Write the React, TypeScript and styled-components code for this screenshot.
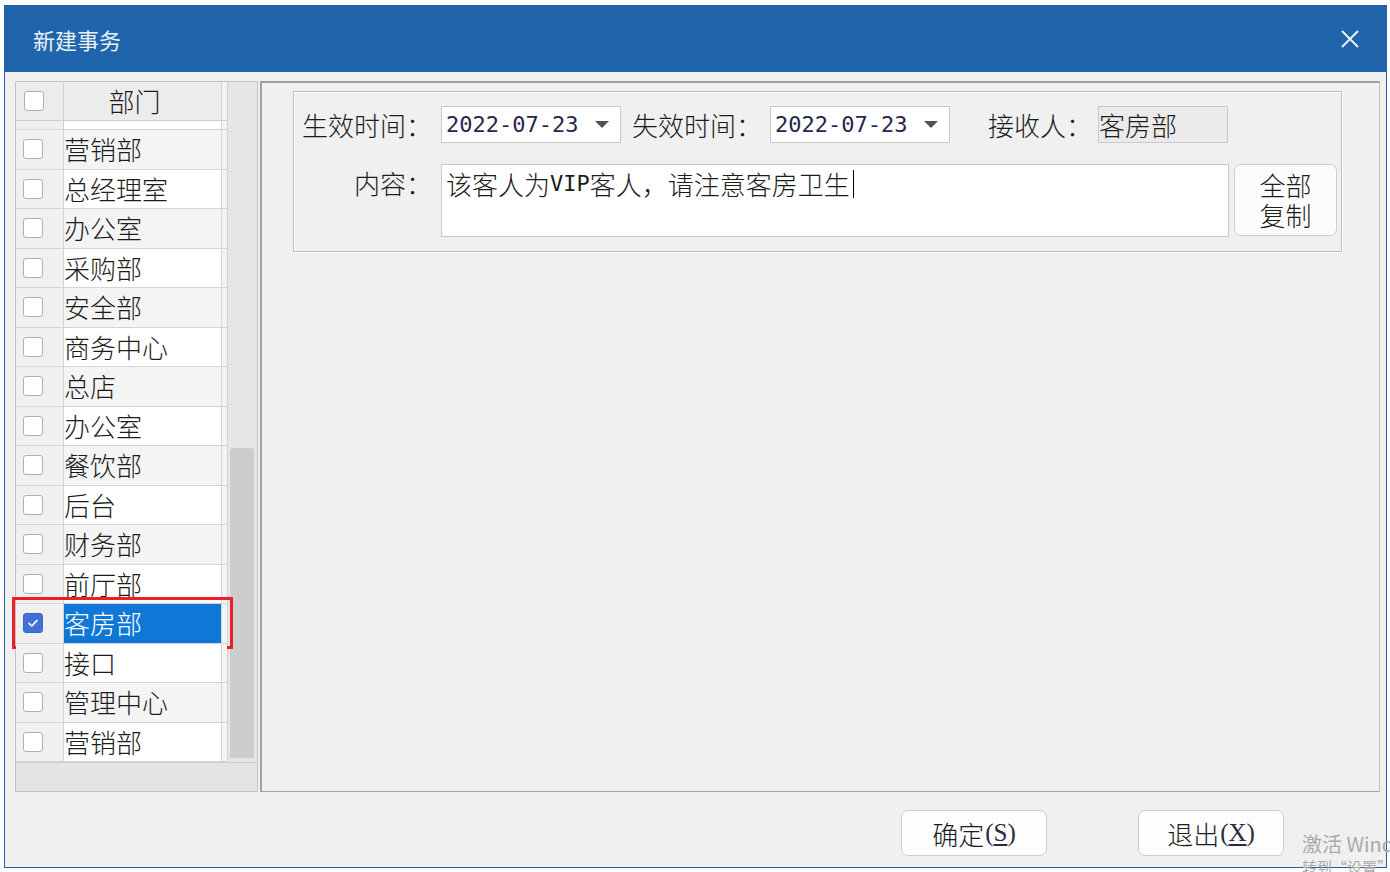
import React from "react";
import styled, { createGlobalStyle } from "styled-components";

const CJK = `"Noto Sans CJK SC", "Noto Sans", sans-serif`;
const MONO = `"DejaVu Sans Mono", "Liberation Mono", "Noto Sans CJK SC", monospace`;

const GlobalStyle = createGlobalStyle`
  html, body { margin: 0; padding: 0; background: #ffffff; overflow: hidden; }
  body { font-family: ${CJK}; color: #1c1c1c; }
  *, *::before, *::after { box-sizing: border-box; }
`;

const Page = styled.div`
  position: relative;
  width: 1390px;
  height: 872px;
  padding: 5px 0 0 4px;
`;

const Window = styled.div`
  width: 1383px;
  height: 863px;
  border: 1px solid #2160a6;
  background: #f0f0f0;
  display: flex;
  flex-direction: column;
`;

const TitleBar = styled.div`
  height: 66px;
  flex-shrink: 0;
  background: #2065ac;
  display: flex;
  align-items: center;
  justify-content: space-between;
  padding: 0 27px 0 28px;
`;

const TitleText = styled.span`
  font-family: ${CJK};
  font-size: 22px;
  color: #e9f0f8;
  letter-spacing: 0;
`;

const CloseButton = styled.span`
  width: 18px;
  height: 18px;
  display: flex;
`;

const Body = styled.div`
  flex: 1;
  display: flex;
  flex-direction: column;
  padding: 9px 6px 0 10px;
`;

const Main = styled.div`
  display: flex;
  gap: 2px;
  height: 711px;
`;

/* ---------- left grid ---------- */
const GridPanel = styled.div`
  width: 243px;
  height: 100%;
  border: 1px solid #c2c2c2;
  background: #f0f0f0;
  display: flex;
  flex-direction: column;
`;

const GridBody = styled.div`
  flex: 1;
  min-height: 0;
  display: flex;
`;

const Table = styled.div`
  width: 212px;
  display: flex;
  flex-direction: column;
  border-right: 1px solid #d2d2d2;
  background: #f4f4f4;
`;

const RowBase = styled.div`
  display: grid;
  grid-template-columns: 48px 158px 1fr;
  border-bottom: 1px solid #d4d4d4;
`;

const HeaderRow = styled(RowBase)`
  height: 39px;
  background: #ececec;
  border-bottom-color: #cdcdcd;
`;

const PartialRow = styled(RowBase)`
  height: 9px;
`;

const DataRow = styled(RowBase)`
  position: relative;
  height: 39.5px;
`;

const CheckCell = styled.div`
  display: flex;
  align-items: center;
  padding-left: 7px;
  background: #f0f0f0;
  border-right: 1px solid #d4d4d4;
`;

const HeaderCheckCell = styled(CheckCell)`
  padding-left: 8px;
  background: #ececec;
`;

const NameCell = styled.div<{ $alt?: boolean; $selected?: boolean }>`
  display: flex;
  align-items: center;
  font-family: ${CJK};
  font-size: 26px;
  font-weight: 300;
  line-height: 1;
  white-space: nowrap;
  border-right: 1px solid #d4d4d4;
  background: ${(p) => (p.$selected ? "#0f77d6" : p.$alt ? "#f4f4f4" : "#ffffff")};
  color: ${(p) => (p.$selected ? "#ffffff" : "#1c1c1c")};
`;

const HeaderNameCell = styled(NameCell)`
  justify-content: center;
  padding-right: 16px;
  background: #ececec;
`;

const FillerCell = styled.div`
  background: #f4f4f4;
`;

const Highlight = styled.div`
  position: absolute;
  left: -4px;
  top: -7px;
  width: 221px;
  height: 52px;
  border: 3px solid #ec1f26;
  pointer-events: none;
`;

const Box = styled.span<{ $checked?: boolean }>`
  width: 20px;
  height: 20px;
  border-radius: 3px;
  border: 1px solid ${(p) => (p.$checked ? "#3b67c9" : "#b0b0b0")};
  background: ${(p) => (p.$checked ? "#4271d6" : "#ffffff")};
  display: flex;
  align-items: center;
  justify-content: center;
`;

const ScrollTrack = styled.div`
  width: 29px;
  background: #e6e6e6;
  display: flex;
  flex-direction: column;
  justify-content: flex-end;
  padding: 0 3px 4px 2px;
`;

const ScrollThumb = styled.div`
  height: 310px;
  background: #cdcdcd;
  border-radius: 3px 3px 0 0;
`;

const BottomStrip = styled.div`
  height: 29px;
  flex-shrink: 0;
  background: #e4e4e4;
  border-top: 1px solid #cdcdcd;
`;

/* ---------- right panel ---------- */
const RightPanel = styled.div`
  flex: 1;
  border-style: solid;
  border-width: 2px 1px 1px 2px;
  border-color: #9f9f9f #c2c2c2 #a3a3a3 #9f9f9f;
  background: #f0f0f0;
  padding: 8px 0 0 31px;
`;

const GroupBox = styled.div`
  width: 1049px;
  height: 161px;
  border: 1px solid #bfbfbf;
  box-shadow: inset 1px 1px 0 #ffffff, 1px 1px 0 #ffffff;
  padding-top: 14px;
`;

const FormRow = styled.div<{ $tall?: boolean }>`
  display: flex;
  align-items: ${(p) => (p.$tall ? "flex-start" : "center")};
  height: ${(p) => (p.$tall ? "73px" : "37px")};
  margin-top: ${(p) => (p.$tall ? "21px" : "0")};
`;

const Label = styled.span<{ $w: number; $ml?: number; $right?: boolean }>`
  width: ${(p) => p.$w}px;
  margin-left: ${(p) => p.$ml ?? 0}px;
  text-align: ${(p) => (p.$right ? "right" : "left")};
  font-family: ${CJK};
  font-size: 26px;
  font-weight: 300;
  line-height: 37px;
  white-space: nowrap;
  flex-shrink: 0;
`;

const Combo = styled.div<{ $ml: number }>`
  width: 180px;
  height: 37px;
  margin-left: ${(p) => p.$ml}px;
  flex-shrink: 0;
  background: #ffffff;
  border: 1px solid #c9c9c9;
  display: flex;
  align-items: center;
  justify-content: space-between;
  padding: 0 11px 0 4px;
`;

const DateText = styled.span`
  font-family: ${MONO};
  font-size: 22px;
  color: #26264e;
  letter-spacing: 0;
`;

const ReadonlyBox = styled.div`
  width: 130px;
  height: 37px;
  margin-left: 6px;
  flex-shrink: 0;
  background: #ebebeb;
  border: 1px solid #c9c9c9;
  display: flex;
  align-items: center;
  font-size: 26px;
  font-weight: 300;
  line-height: 1;
`;

const TextBox = styled.div`
  width: 788px;
  height: 73px;
  margin-left: 9px;
  flex-shrink: 0;
  background: #ffffff;
  border: 1px solid #c9c9c9;
  padding: 1px 0 0 4px;
  font-size: 26px;
  font-weight: 300;
  line-height: 36px;
  white-space: nowrap;
  display: flex;
  align-items: flex-start;
`;

const Latin = styled.span`
  font-family: ${MONO};
  font-size: 22px;
  font-weight: 400;
`;

const Caret = styled.span`
  display: inline-block;
  width: 1px;
  height: 28px;
  margin: 4px 0 0 3px;
  background: #000000;
`;

const CopyButton = styled.button`
  width: 103px;
  height: 72px;
  margin-left: 5px;
  flex-shrink: 0;
  background: #fcfcfc;
  border: 1px solid #cfcfcf;
  border-radius: 7px;
  font-family: ${CJK};
  font-size: 26px;
  font-weight: 300;
  line-height: 30px;
  color: #1c1c1c;
  padding: 0;
  display: flex;
  flex-direction: column;
  align-items: center;
  justify-content: center;
`;

/* ---------- footer ---------- */
const Footer = styled.div`
  display: flex;
  justify-content: flex-end;
  gap: 91px;
  padding: 18px 96px 0 0;
`;

const DialogButton = styled.button`
  width: 146px;
  height: 46px;
  background: #fdfdfd;
  border: 1px solid #cdcdcd;
  border-radius: 7px;
  font-family: ${CJK};
  font-size: 26px;
  font-weight: 300;
  color: #1c1c1c;
  padding: 0;
  display: flex;
  align-items: center;
  justify-content: center;
`;

const Accel = styled.span`
  font-family: "Liberation Serif", serif;
  font-size: 25px;
  color: #2a2a40;
  margin-left: 1px;
  & u {
    text-underline-offset: 3px;
  }
`;

const Watermark = styled.div`
  position: absolute;
  left: 1302px;
  top: 831px;
  color: #a9a9a9;
  font-family: ${CJK};
  font-size: 20px;
  line-height: 26px;
  white-space: nowrap;
`;

const WatermarkSub = styled.div`
  font-size: 15px;
  line-height: 20px;
`;

const departments = [
  "营销部",
  "总经理室",
  "办公室",
  "采购部",
  "安全部",
  "商务中心",
  "总店",
  "办公室",
  "餐饮部",
  "后台",
  "财务部",
  "前厅部",
  "客房部",
  "接口",
  "管理中心",
  "营销部",
];

const SELECTED = 12;

const CheckMark = () => (
  <svg width="14" height="14" viewBox="0 0 14 14">
    <path d="M3 7.3 L5.8 10 L11 4.4" fill="none" stroke="#ffffff" strokeWidth="1.6" strokeLinecap="round" strokeLinejoin="round" />
  </svg>
);

const Arrow = () => (
  <svg width="14" height="7" viewBox="0 0 14 7">
    <polygon points="0,0 14,0 7,7" fill="#4b5848" />
  </svg>
);

export default function App() {
  return (
    <Page>
      <GlobalStyle />
      <Window>
        <TitleBar>
          <TitleText>新建事务</TitleText>
          <CloseButton>
            <svg width="18" height="18" viewBox="0 0 18 18">
              <path d="M1 1 L17 17 M17 1 L1 17" stroke="#f2f6fb" strokeWidth="1.8" />
            </svg>
          </CloseButton>
        </TitleBar>
        <Body>
          <Main>
            <GridPanel>
              <GridBody>
                <Table>
                  <HeaderRow>
                    <HeaderCheckCell>
                      <Box />
                    </HeaderCheckCell>
                    <HeaderNameCell>部门</HeaderNameCell>
                    <FillerCell />
                  </HeaderRow>
                  <PartialRow>
                    <CheckCell />
                    <NameCell />
                    <FillerCell />
                  </PartialRow>
                  {departments.map((name, i) => (
                    <DataRow key={i}>
                      <CheckCell>
                        <Box $checked={i === SELECTED}>{i === SELECTED && <CheckMark />}</Box>
                      </CheckCell>
                      <NameCell $alt={i % 2 === 0} $selected={i === SELECTED}>
                        {name}
                      </NameCell>
                      <FillerCell />
                      {i === SELECTED && <Highlight />}
                    </DataRow>
                  ))}
                </Table>
                <ScrollTrack>
                  <ScrollThumb />
                </ScrollTrack>
              </GridBody>
              <BottomStrip />
            </GridPanel>
            <RightPanel>
              <GroupBox>
                <FormRow>
                  <Label $w={138} $right>
                    生效时间：
                  </Label>
                  <Combo $ml={9}>
                    <DateText>2022-07-23</DateText>
                    <Arrow />
                  </Combo>
                  <Label $w={130} $ml={11}>
                    失效时间：
                  </Label>
                  <Combo $ml={8}>
                    <DateText>2022-07-23</DateText>
                    <Arrow />
                  </Combo>
                  <Label $w={104} $ml={38}>
                    接收人：
                  </Label>
                  <ReadonlyBox>客房部</ReadonlyBox>
                </FormRow>
                <FormRow $tall>
                  <Label $w={138} $right>
                    内容：
                  </Label>
                  <TextBox>
                    该客人为<Latin>VIP</Latin>客人，请注意客房卫生
                    <Caret />
                  </TextBox>
                  <CopyButton>
                    <span>全部</span>
                    <span>复制</span>
                  </CopyButton>
                </FormRow>
              </GroupBox>
            </RightPanel>
          </Main>
          <Footer>
            <DialogButton>
              确定
              <Accel>
                (<u>S</u>)
              </Accel>
            </DialogButton>
            <DialogButton>
              退出
              <Accel>
                (<u>X</u>)
              </Accel>
            </DialogButton>
          </Footer>
        </Body>
      </Window>
      <Watermark>
        激活 Windows
        <WatermarkSub>转到“设置”以激活 Windows。</WatermarkSub>
      </Watermark>
    </Page>
  );
}
